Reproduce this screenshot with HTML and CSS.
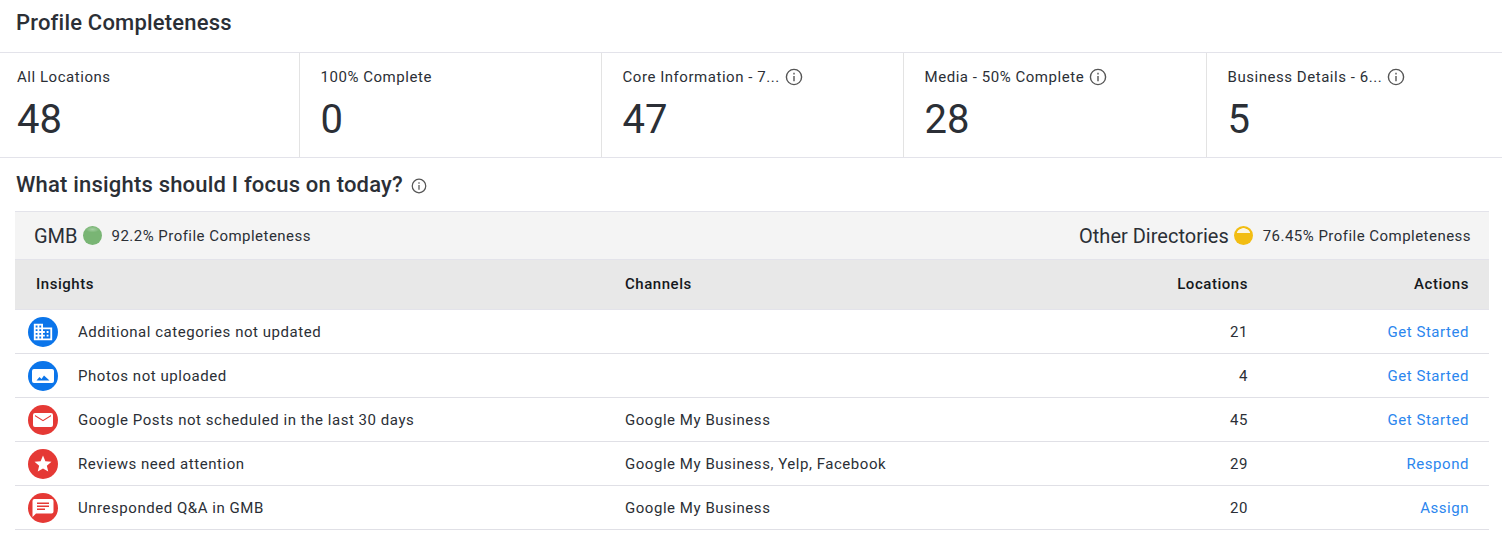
FILE: index.html
```html
<!DOCTYPE html>
<html lang="en">

<head>
    <meta charset="UTF-8">
    <title>Profile Completeness</title>
    <link rel="stylesheet" href="styles.css">
</head>

<body>

    <h1 class="page-title">Profile Completeness</h1>

    <div class="stats">
        <div class="stat">
            <div class="stat-label">All Locations</div>
            <div class="stat-value">48</div>
        </div>
        <div class="stat">
            <div class="stat-label">100% Complete</div>
            <div class="stat-value">0</div>
        </div>
        <div class="stat">
            <div class="stat-label">Core Information - 7...
                <svg class="info" viewBox="0 0 18 18"><circle cx="9" cy="9" r="7.6"/><path d="M9 8v5.2M9 4.8v1.6"/></svg>
            </div>
            <div class="stat-value">47</div>
        </div>
        <div class="stat">
            <div class="stat-label">Media - 50% Complete
                <svg class="info" viewBox="0 0 18 18"><circle cx="9" cy="9" r="7.6"/><path d="M9 8v5.2M9 4.8v1.6"/></svg>
            </div>
            <div class="stat-value">28</div>
        </div>
        <div class="stat">
            <div class="stat-label">Business Details - 6...
                <svg class="info" viewBox="0 0 18 18"><circle cx="9" cy="9" r="7.6"/><path d="M9 8v5.2M9 4.8v1.6"/></svg>
            </div>
            <div class="stat-value">5</div>
        </div>
    </div>

    <h2 class="section-title">What insights should I focus on today?
        <svg class="info info-small" viewBox="0 0 18 18"><circle cx="9" cy="9" r="7.6"/><path d="M9 8v5.2M9 4.8v1.6"/></svg>
    </h2>

    <div class="panel">
        <div class="summary">
            <div class="summary-item">
                <span class="summary-name">GMB</span>
                <span class="dot dot-green"></span>
                <span class="summary-text">92.2% Profile Completeness</span>
            </div>
            <div class="summary-item">
                <span class="summary-name">Other Directories</span>
                <span class="dot dot-yellow"></span>
                <span class="summary-text">76.45% Profile Completeness</span>
            </div>
        </div>

        <table class="insights">
            <thead>
                <tr>
                    <th class="col-name">Insights</th>
                    <th class="col-channels">Channels</th>
                    <th class="col-num">Locations</th>
                    <th class="col-action">Actions</th>
                </tr>
            </thead>
            <tbody>
                <tr>
                    <td class="col-name">
                        <div class="insight">
                            <span class="badge badge-blue">
                                <svg viewBox="0 0 24 24"><path d="M12 7V3H2v18h20V7H12zM6 19H4v-2h2v2zm0-4H4v-2h2v2zm0-4H4V9h2v2zm0-4H4V5h2v2zm4 12H8v-2h2v2zm0-4H8v-2h2v2zm0-4H8V9h2v2zm0-4H8V5h2v2zm10 12h-8v-2h2v-2h-2v-2h2v-2h-2V9h8v10zm-2-8h-2v2h2v-2zm0 4h-2v2h2v-2z"/></svg>
                            </span>
                            Additional categories not updated
                        </div>
                    </td>
                    <td></td>
                    <td class="col-num">21</td>
                    <td class="col-action"><a href="#">Get Started</a></td>
                </tr>
                <tr>
                    <td class="col-name">
                        <div class="insight">
                            <span class="badge badge-blue">
                                <svg viewBox="1 1 22 22"><path d="M21 5H3a2 2 0 0 0-2 2v10a2 2 0 0 0 2 2h18a2 2 0 0 0 2-2V7a2 2 0 0 0-2-2zM5.5 16.5l3-3.5 2 2 2.500-3.500 5.500 5h-13z"/></svg>
                            </span>
                            Photos not uploaded
                        </div>
                    </td>
                    <td></td>
                    <td class="col-num">4</td>
                    <td class="col-action"><a href="#">Get Started</a></td>
                </tr>
                <tr>
                    <td class="col-name">
                        <div class="insight">
                            <span class="badge badge-red">
                                <svg viewBox="1 1 22 22"><path d="M20 5H4a2 2 0 0 0-2 2v10a2 2 0 0 0 2 2h16a2 2 0 0 0 2-2V7a2 2 0 0 0-2-2zm0 3.2-8 5-8-5V7l8 5 8-5v1.2z"/></svg>
                            </span>
                            Google Posts not scheduled in the last 30 days
                        </div>
                    </td>
                    <td>Google My Business</td>
                    <td class="col-num">45</td>
                    <td class="col-action"><a href="#">Get Started</a></td>
                </tr>
                <tr>
                    <td class="col-name">
                        <div class="insight">
                            <span class="badge badge-red">
                                <svg viewBox="-1 -1 26 26"><path d="M12 17.27 18.18 21l-1.64-7.03L22 9.24l-7.19-.61L12 2 9.19 8.63 2 9.24l5.46 4.73L5.82 21z"/></svg>
                            </span>
                            Reviews need attention
                        </div>
                    </td>
                    <td>Google My Business, Yelp, Facebook</td>
                    <td class="col-num">29</td>
                    <td class="col-action"><a href="#">Respond</a></td>
                </tr>
                <tr>
                    <td class="col-name">
                        <div class="insight">
                            <span class="badge badge-red">
                                <svg viewBox="1 1 22 22"><path d="M20.500 3h-17a2 2 0 0 0-2 2v16L5 17.500h15.500a2 2 0 0 0 2-2V5a2 2 0 0 0-2-2zM6 6.500h12V8H6V6.500zm0 3h12V11H6V9.500zm0 3h8V14H6v-1.500z"/></svg>
                            </span>
                            Unresponded Q&amp;A in GMB
                        </div>
                    </td>
                    <td>Google My Business</td>
                    <td class="col-num">20</td>
                    <td class="col-action"><a href="#">Assign</a></td>
                </tr>
            </tbody>
        </table>
    </div>

</body>

</html>
```

FILE: styles.css
```css
body {
    margin: 0;
    font-family: Roboto, sans-serif;
    font-size: 15px;
    letter-spacing: 0.54px;
    color: #2b2f36;
    background-color: #fff;
}

.page-title {
    margin: 0;
    height: 52px;
    padding-left: 16px;
    font-size: 22px;
    font-weight: 500;
    line-height: 46px;
    letter-spacing: 0.2px;
    border-bottom: 1px solid #e3e3ea;
}

.stats {
    display: grid;
    grid-template-columns: 300px 302px 302px 303px 1fr;
    height: 104px;
    border-bottom: 1px solid #e3e3ea;
}

.stat {
    padding: 14px 0 0 20.5px;
    border-right: 1px solid #e3e3e3;
}

.stat:first-child {
    padding-left: 17px;
}

.stat:last-child {
    border-right: 0;
}

.stat-label {
    display: flex;
    align-items: center;
    gap: 5px;
    height: 20px;
}

.stat-value {
    margin-top: 9px;
    font-size: 40px;
    line-height: 48px;
    letter-spacing: 0;
}

.info {
    width: 18px;
    height: 18px;
    fill: none;
    stroke: #555;
    stroke-width: 1.4;
}

.info-small {
    width: 16px;
    height: 16px;
    margin: 2px 0 0 2px;
}

.section-title {
    display: flex;
    align-items: center;
    gap: 6px;
    margin: 0;
    height: 53px;
    padding-left: 16px;
    font-size: 22px;
    font-weight: 500;
    letter-spacing: 0.2px;
}

.panel {
    margin: 0 13px 0 15px;
}

.summary {
    display: flex;
    justify-content: space-between;
    align-items: center;
    height: 47px;
    padding: 0 18px 0 19px;
    background-color: #f4f4f4;
    border-top: 1px solid #e3e3ea;
}

.summary-item {
    display: flex;
    align-items: center;
}

.summary-name {
    font-size: 20px;
    letter-spacing: 0;
}

.summary-text {
    margin-left: 10px;
    letter-spacing: 0.47px;
}

.dot {
    width: 19px;
    height: 19px;
    margin-left: 5px;
    border-radius: 50%;
}

.dot-green {
    background: radial-gradient(ellipse 7px 3px at 50% 18%, #a5cfa3 0, #79b574 100%), #79b574;
}

.dot-yellow {
    background: linear-gradient(transparent 0, transparent 38%, #f2bd12 38%), radial-gradient(circle at center, #fbf6e2 7px, #f2bd12 7.5px);
}

.insights {
    width: 100%;
    border-collapse: collapse;
    table-layout: fixed;
}

.insights th {
    height: 47px;
    padding: 0 0 2px;
    font-weight: 500;
    text-align: left;
    color: #15181d;
    background-color: #e8e8e8;
    border-top: 1px solid #e3e3ea;
    border-bottom: 1px solid #e3e3ea;
}

.insights td {
    height: 43px;
    padding: 0;
    border-bottom: 1px solid #e0e0e6;
}

.col-name {
    width: 610px;
}

.insights th.col-name {
    padding-left: 21px;
    width: 589px;
}

.col-channels {
    width: 401px;
}

.insights th.col-num,
.insights td.col-num {
    width: 222px;
    text-align: right;
}

.insights th.col-action,
.insights td.col-action {
    padding-right: 20px;
    text-align: right;
}

.insight {
    display: flex;
    align-items: center;
    gap: 20px;
    padding-left: 13px;
}

.badge {
    display: flex;
    align-items: center;
    justify-content: center;
    flex: none;
    width: 30px;
    height: 30px;
    border-radius: 50%;
}

.badge svg {
    width: 22px;
    height: 22px;
    fill: #fff;
    fill-rule: evenodd;
}

.badge-blue {
    background-color: #0b75ea;
}

.badge-red {
    background-color: #e53935;
}

a {
    color: #2b86ee;
    text-decoration: none;
}
```
